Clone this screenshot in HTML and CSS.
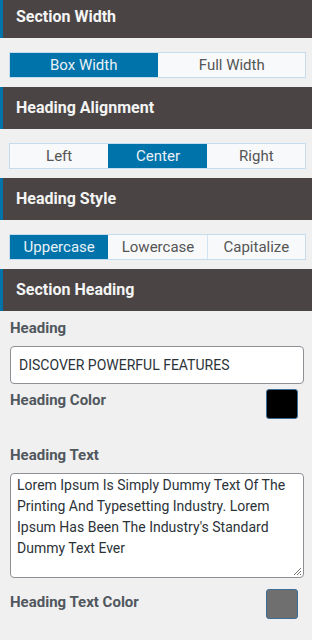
FILE: index.html
```html
<!DOCTYPE html>
<html>
<head>
<meta charset="utf-8">
<link rel="stylesheet" href="styles.css">
</head>
<body>
<div class="panel">
  <div class="section-head first">Section Width</div>
  <div class="group-wrap">
    <div class="btn-group two">
      <div class="btn active">Box Width</div>
      <div class="btn">Full Width</div>
    </div>
  </div>

  <div class="section-head">Heading Alignment</div>
  <div class="group-wrap">
    <div class="btn-group three">
      <div class="btn">Left</div>
      <div class="btn active">Center</div>
      <div class="btn">Right</div>
    </div>
  </div>

  <div class="section-head">Heading Style</div>
  <div class="group-wrap">
    <div class="btn-group three">
      <div class="btn active">Uppercase</div>
      <div class="btn">Lowercase</div>
      <div class="btn">Capitalize</div>
    </div>
  </div>

  <div class="section-head">Section Heading</div>
  <div class="fields">
    <div class="label label-first">Heading</div>
    <div class="input">DISCOVER POWERFUL FEATURES</div>
    <div class="color-row">
      <div class="label">Heading Color</div>
      <div class="swatch black"></div>
    </div>
    <div class="label label-text">Heading Text</div>
    <div class="textarea">Lorem Ipsum Is Simply Dummy Text Of The Printing And Typesetting Industry. Lorem Ipsum Has Been The Industry's Standard Dummy Text Ever<svg class="grip" width="9" height="9" viewBox="0 0 9 9"><path d="M8 1L1 8M8 4L4 8M8 7L7 8" stroke="#777" stroke-width="1" fill="none"/></svg></div>
    <div class="color-row second">
      <div class="label">Heading Text Color</div>
      <div class="swatch gray"></div>
    </div>
  </div>
</div>
</body>
</html>
```

FILE: styles.css
```css
* { box-sizing: border-box; }
html, body { margin: 0; padding: 0; }
body {
  width: 312px;
  height: 640px;
  overflow: hidden;
  background: #f0f0f0;
  font-family: Roboto, "Liberation Sans", sans-serif;
}
.panel { background: #f0f0f0; }
.section-head {
  height: 42px;
  background: #4a4544;
  border-left: 3px solid #0073aa;
  color: #f4f4f4;
  font-size: 16px;
  font-weight: 700;
  padding-left: 13px;
  line-height: 42px;
}
.section-head.first {
  height: 38px;
  line-height: 34px;
}
.group-wrap {
  padding: 14px 6px 9px 9px;
}
.btn-group {
  display: grid;
  height: 26px;
  border: 1px solid #c5dcef;
  background: #f8f9fa;
}
.btn-group.two { grid-template-columns: 1fr 1fr; }
.btn-group.three { grid-template-columns: 1fr 1fr 1fr; }
.btn {
  display: flex;
  align-items: center;
  justify-content: center;
  font-size: 15px;
  color: #555;
  border-left: 1px solid #d3e3f1;
}
.btn:first-child { border-left: none; }
.btn.active {
  background: #0073aa;
  color: #e9f1f7;
  border-left-color: #0073aa;
}
.btn.active + .btn { border-left-color: transparent; }
.fields {
  padding: 0 8px 0 10px;
}
.label {
  font-size: 15px;
  font-weight: 700;
  color: #50575e;
  line-height: 20px;
}
.label-first { margin-top: 7px; }
.input {
  margin-top: 8px;
  height: 38px;
  border: 1px solid #8c8f94;
  border-radius: 4px;
  background: #fff;
  font-size: 14px;
  color: #2c3338;
  padding-left: 8px;
  line-height: 36px;
}
.color-row {
  display: flex;
  justify-content: space-between;
  align-items: flex-start;
  margin-top: 5px;
  padding-right: 6px;
}
.color-row .label { margin-top: 1px; }
.color-row.second { margin-top: 11px; }
.color-row.second .label { margin-top: 3px; }
.swatch {
  width: 32px;
  height: 30px;
  border-radius: 3px;
  border: 1px solid #3c6d98;
}
.swatch.black { background: #000; }
.swatch.gray { background: #6f6f6f; }
.label-text { margin-top: 26px; }
.textarea {
  position: relative;
  margin-top: 8px;
  height: 105px;
  border: 1px solid #8c8f94;
  border-radius: 4px;
  background: #fff;
  font-size: 14px;
  line-height: 21px;
  color: #2c3338;
  padding: 1px 6px 0 6px;
}
.grip {
  position: absolute;
  right: 1px;
  bottom: 1px;
}
```
